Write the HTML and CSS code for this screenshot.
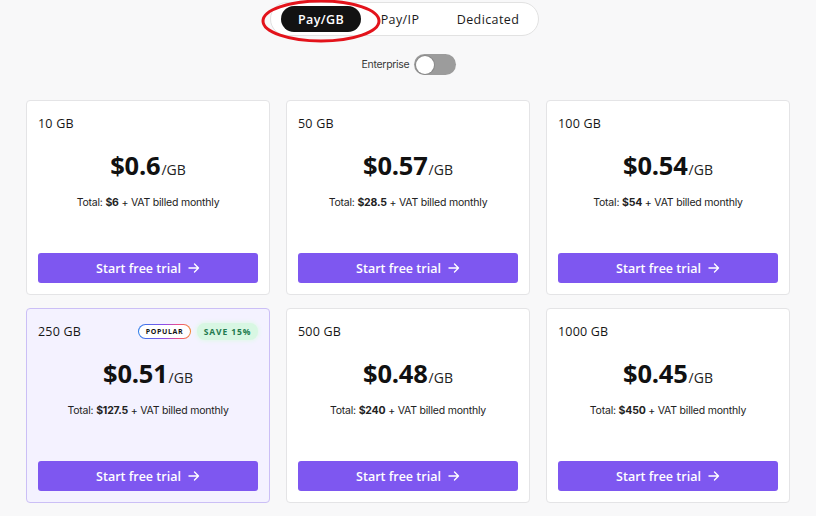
FILE: index.html
```html
<!DOCTYPE html>
<html>
<head>
<meta charset="utf-8">
<link rel="stylesheet" href="styles.css">
</head>
<body>
<div class="page">
  <div class="tabs-wrap">
    <div class="tabs">
      <span class="tab active">Pay/GB</span>
      <span class="tab tab-ip">Pay/IP</span>
      <span class="tab tab-wide">Dedicated</span>
    </div>
    <svg class="mark" width="122" height="46" viewBox="0 0 122 46"><ellipse cx="61" cy="21" rx="58" ry="20" fill="none" stroke="#e3131b" stroke-width="3"/></svg>
  </div>
  <div class="ent">
    <span class="ent-label">Enterprise</span>
    <span class="toggle"><span class="knob"></span></span>
  </div>
  <div class="grid">
    <div class="card">
      <div class="head"><span class="gb">10 GB</span></div>
      <div class="price"><span class="amt">$0.6</span><span class="unit">/GB</span></div>
      <div class="total">Total: <b>$6</b> + VAT billed monthly</div>
      <button class="btn">Start free trial <svg width="12" height="12" viewBox="0 0 12 12"><path d="M1 6h9.5M6.5 2l4 4-4 4" fill="none" stroke="#fff" stroke-width="1.4" stroke-linecap="round" stroke-linejoin="round"/></svg></button>
    </div>
    <div class="card">
      <div class="head"><span class="gb">50 GB</span></div>
      <div class="price"><span class="amt">$0.57</span><span class="unit">/GB</span></div>
      <div class="total">Total: <b>$28.5</b> + VAT billed monthly</div>
      <button class="btn">Start free trial <svg width="12" height="12" viewBox="0 0 12 12"><path d="M1 6h9.5M6.5 2l4 4-4 4" fill="none" stroke="#fff" stroke-width="1.4" stroke-linecap="round" stroke-linejoin="round"/></svg></button>
    </div>
    <div class="card">
      <div class="head"><span class="gb">100 GB</span></div>
      <div class="price"><span class="amt">$0.54</span><span class="unit">/GB</span></div>
      <div class="total">Total: <b>$54</b> + VAT billed monthly</div>
      <button class="btn">Start free trial <svg width="12" height="12" viewBox="0 0 12 12"><path d="M1 6h9.5M6.5 2l4 4-4 4" fill="none" stroke="#fff" stroke-width="1.4" stroke-linecap="round" stroke-linejoin="round"/></svg></button>
    </div>
    <div class="card popular">
      <div class="head"><span class="gb">250 GB</span>
        <span class="badges"><span class="pop"><span class="pop-in">POPULAR</span></span><span class="save">SAVE 15%</span></span>
      </div>
      <div class="price"><span class="amt">$0.51</span><span class="unit">/GB</span></div>
      <div class="total">Total: <b>$127.5</b> + VAT billed monthly</div>
      <button class="btn">Start free trial <svg width="12" height="12" viewBox="0 0 12 12"><path d="M1 6h9.5M6.5 2l4 4-4 4" fill="none" stroke="#fff" stroke-width="1.4" stroke-linecap="round" stroke-linejoin="round"/></svg></button>
    </div>
    <div class="card">
      <div class="head"><span class="gb">500 GB</span></div>
      <div class="price"><span class="amt">$0.48</span><span class="unit">/GB</span></div>
      <div class="total">Total: <b>$240</b> + VAT billed monthly</div>
      <button class="btn">Start free trial <svg width="12" height="12" viewBox="0 0 12 12"><path d="M1 6h9.5M6.5 2l4 4-4 4" fill="none" stroke="#fff" stroke-width="1.4" stroke-linecap="round" stroke-linejoin="round"/></svg></button>
    </div>
    <div class="card">
      <div class="head"><span class="gb">1000 GB</span></div>
      <div class="price"><span class="amt">$0.45</span><span class="unit">/GB</span></div>
      <div class="total">Total: <b>$450</b> + VAT billed monthly</div>
      <button class="btn">Start free trial <svg width="12" height="12" viewBox="0 0 12 12"><path d="M1 6h9.5M6.5 2l4 4-4 4" fill="none" stroke="#fff" stroke-width="1.4" stroke-linecap="round" stroke-linejoin="round"/></svg></button>
    </div>
  </div>
</div>
</body>
</html>
```

FILE: styles.css
```css
* { box-sizing: border-box; }
html, body { margin: 0; padding: 0; }
body {
  background: #f8f8f9;
  font-family: "Open Sans", "Noto Sans", sans-serif;
  color: #151515;
  width: 816px;
  height: 516px;
  overflow: hidden;
}
.page {
  padding: 2px 26px 0;
  display: flex;
  flex-direction: column;
  align-items: center;
}
.tabs-wrap {
  position: relative;
  margin-left: -7px;
}
.tabs {
  display: flex;
  align-items: center;
  width: 269px;
  height: 34px;
  padding: 0 0 0 10px;
  background: #fff;
  border: 1px solid #e2e2e2;
  border-radius: 17px;
}
.tab {
  flex-shrink: 0;
  display: flex;
  align-items: center;
  justify-content: center;
  width: 80px;
  height: 26px;
  font-size: 12.5px;
  font-weight: 500;
  letter-spacing: 0.4px;
  color: #1a1a1a;
  border-radius: 13px;
}
.tab.active {
  background: #121212;
  color: #fff;
  font-weight: 600;
}
.tab-ip { width: 78px; }
.tab-wide { width: 98px; }
.mark {
  position: absolute;
  left: -10px;
  top: -2px;
}
.ent {
  margin-top: 18px;
  display: flex;
  align-items: center;
  gap: 5px;
  margin-left: 2px;
}
.ent-label {
  font-family: "Inter", "Liberation Sans", sans-serif;
  font-size: 10.5px;
  color: #3a3a3a;
  letter-spacing: -0.3px;
}
.toggle {
  display: flex;
  align-items: center;
  width: 42px;
  height: 21px;
  border-radius: 11px;
  background: #9c9c9c;
  padding: 0 2px;
}
.knob {
  width: 18px;
  height: 18px;
  border-radius: 50%;
  background: #fff;
  box-shadow: 0 0 0 1px #8a8a8a;
}
.grid {
  margin-top: 25px;
  width: 764px;
  display: grid;
  grid-template-columns: repeat(3, 1fr);
  column-gap: 16px;
  row-gap: 13px;
}
.card {
  height: 195px;
  background: #fff;
  border: 1px solid #e4e4e6;
  border-radius: 4px;
  padding: 13px 11px 11px;
  display: flex;
  flex-direction: column;
}
.card.popular {
  background: #f4f2ff;
  border-color: #cbbff6;
}
.head {
  height: 18px;
  display: flex;
  align-items: center;
  justify-content: space-between;
}
.gb {
  font-size: 12.5px;
  font-weight: 500;
  color: #161616;
  letter-spacing: 0.2px;
}
.badges {
  display: flex;
  align-items: center;
  gap: 6px;
}
.pop {
  display: flex;
  padding: 1px;
  border-radius: 8px;
  background: linear-gradient(90deg, #2b7de9, #8b4dea 50%, #ee4b8a 75%, #f28b30);
}
.pop-in {
  display: flex;
  align-items: center;
  justify-content: center;
  width: 51px;
  height: 13px;
  border-radius: 7px;
  background: #fff;
  font-size: 7px;
  font-weight: 700;
  letter-spacing: 0.6px;
  color: #111;
}
.save {
  display: flex;
  align-items: center;
  justify-content: center;
  width: 61px;
  height: 17px;
  border-radius: 8px;
  background: #d8f7e3;
  box-shadow: 0 0 4px 1px #e1f8e9;
  font-size: 8.5px;
  font-weight: 700;
  letter-spacing: 0.9px;
  color: #227a4e;
}
.price {
  margin-top: 16px;
  height: 32px;
  display: flex;
  align-items: baseline;
  justify-content: center;
}
.amt {
  font-size: 25.5px;
  font-weight: 700;
  color: #111;
  letter-spacing: -0.2px;
}
.unit {
  font-size: 14px;
  font-weight: 400;
  color: #222;
  margin-left: 1px;
}
.total {
  margin-top: 15px;
  text-align: center;
  font-family: "Inter", "Liberation Sans", sans-serif;
  font-size: 10.5px;
  line-height: 16px;
  color: #222;
  letter-spacing: -0.2px;
}
.total b { font-weight: 700; }
.btn {
  margin-top: auto;
  height: 30px;
  width: 100%;
  border: none;
  border-radius: 3px;
  background: #7e57f0;
  color: #fff;
  font-family: "Open Sans", "Noto Sans", sans-serif;
  font-size: 12.5px;
  font-weight: 600;
  display: flex;
  align-items: center;
  justify-content: center;
  gap: 7px;
  padding: 0;
}
```
